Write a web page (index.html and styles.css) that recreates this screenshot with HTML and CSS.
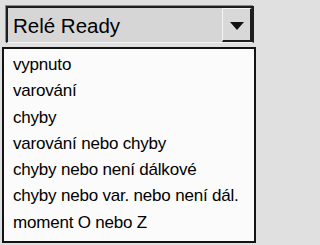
FILE: index.html
```html
<!DOCTYPE html>
<html lang="cs">
<head>
<meta charset="utf-8">
<title>Relé Ready</title>
<link rel="stylesheet" href="styles.css">
</head>
<body>
<div class="combo">
  <div class="combo-value">Relé Ready</div>
  <div class="combo-button">
    <svg class="arrow" width="14" height="8" viewBox="0 0 14 8"><polygon points="0,0 14,0 7,8" fill="#111"/></svg>
  </div>
</div>
<ul class="list">
  <li>vypnuto</li>
  <li>varování</li>
  <li>chyby</li>
  <li>varování nebo chyby</li>
  <li>chyby nebo není dálkové</li>
  <li>chyby nebo var. nebo není dál.</li>
  <li>moment O nebo Z</li>
</ul>
</body>
</html>
```
FILE: styles.css
```css
html, body {
  margin: 0;
  padding: 0;
}
body {
  width: 258px;
  height: 245px;
  background: #e0e0e0;
  font-family: "Liberation Sans", Arial, sans-serif;
  color: #000;
  overflow: hidden;
  padding-top: 6px;
  box-sizing: border-box;
}
.combo {
  margin: 0 4px 0 6px;
  height: 37px;
  box-sizing: border-box;
  border-style: solid;
  border-width: 2px 2px 1px 2px;
  border-color: #1e1e1e #1e1e1e #f2f2f2 #1e1e1e;
  box-shadow: -1px -1px 0 #8c8c8c;
  background: #d6d6d6;
  display: flex;
}
.combo-value {
  flex: 1;
  font-size: 20.5px;
  line-height: 32px;
  padding: 2px 0 0 5px;
  white-space: nowrap;
}
.combo-button {
  width: 30px;
  box-sizing: border-box;
  border-style: solid;
  border-width: 1px 2px 2px 1px;
  border-color: #f6f6f6 #1e1e1e #1e1e1e #f6f6f6;
  background: #d8d8d8;
  display: flex;
  align-items: center;
  justify-content: center;
  padding-top: 2px;
}
.arrow {
  display: block;
}
.list {
  list-style: none;
  margin: 4px 2px 0 2px;
  height: 196px;
  box-sizing: border-box;
  border: 2px solid #141414;
  background: #fbfbfb;
  padding: 3px 0 0 9px;
}
.list li {
  font-size: 17px;
  line-height: 26.3px;
  letter-spacing: -0.2px;
  white-space: nowrap;
}
```
